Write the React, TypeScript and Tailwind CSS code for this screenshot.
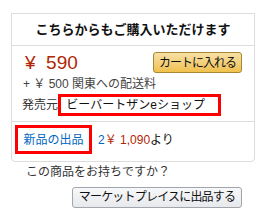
import React from 'react';

const font = "font-['Liberation_Sans','Noto_Sans_CJK_JP',sans-serif]";

export default function App() {
  return (
    <div className={`w-[270px] h-[217px] bg-white text-[#111] ${font}`}>
      <div className="pt-[13px] pl-[11px]">
        <div className="w-[244px] border border-[#ddd] rounded-b-[4px]">
          <div className="h-[32px] flex items-center justify-center border-b border-[#ddd] text-[13px] font-bold leading-none">
            こちらからもご購入いただけます
          </div>

          <div className="pl-[10px] pr-[12px] pt-[6px] pb-[5px] border-b border-[#ddd]">
            <div className="flex items-center justify-between">
              <span className="pl-[3px] text-[19px] leading-none text-[#B12704]">¥&nbsp;&nbsp;590</span>
              <button className="w-[89px] h-[21px] rounded-[3px] border border-[#a88734] bg-gradient-to-b from-[#f7dfa5] to-[#f0c14b] text-[12px] leading-none tracking-[-1px] whitespace-nowrap text-[#111]">
                カートに入れる
              </button>
            </div>
            <div className="mt-[4px] pl-[1px] text-[12px] leading-[14px] text-[#444]">
              + ￥ 500 関東への配送料
            </div>
            <div className="mt-[3px] flex items-center text-[12px] text-[#333]">
              <span>発売元:</span>
              <span className="ml-[-3px] h-[22px] w-[163px] flex items-center border-[3px] border-[#f00] pl-[5px] text-[#111] whitespace-nowrap">
                ビーバートザンeショップ
              </span>
            </div>
          </div>

          <div className="h-[39px] flex items-center pl-[3px] text-[12px]">
            <span className="mt-[-4px] h-[29px] w-[77px] flex items-center justify-center border-[3px] border-[#f00] text-[#0066c0] whitespace-nowrap">
              新品の出品
            </span>
            <span className="ml-[6px] mt-[-4px] whitespace-nowrap">
              <span className="text-[#0066c0]">2</span>
              <span className="text-[#B12704]">￥ 1,090</span>
              <span className="text-[#111]">より</span>
            </span>
          </div>
        </div>
      </div>

      <div className="pl-[26px] mt-[2px] text-[12px] leading-[16px] text-[#333]">
        この商品をお持ちですか？
      </div>
      <div className="pl-[72px] mt-[4px]">
        <button className="w-[170px] h-[21px] rounded-[3px] border border-[#a2a6ac] bg-gradient-to-b from-[#f7f8fa] to-[#e7e9ec] text-[12px] leading-none tracking-[-0.8px] whitespace-nowrap text-[#111]">
          マーケットプレイスに出品する
        </button>
      </div>
    </div>
  );
}
